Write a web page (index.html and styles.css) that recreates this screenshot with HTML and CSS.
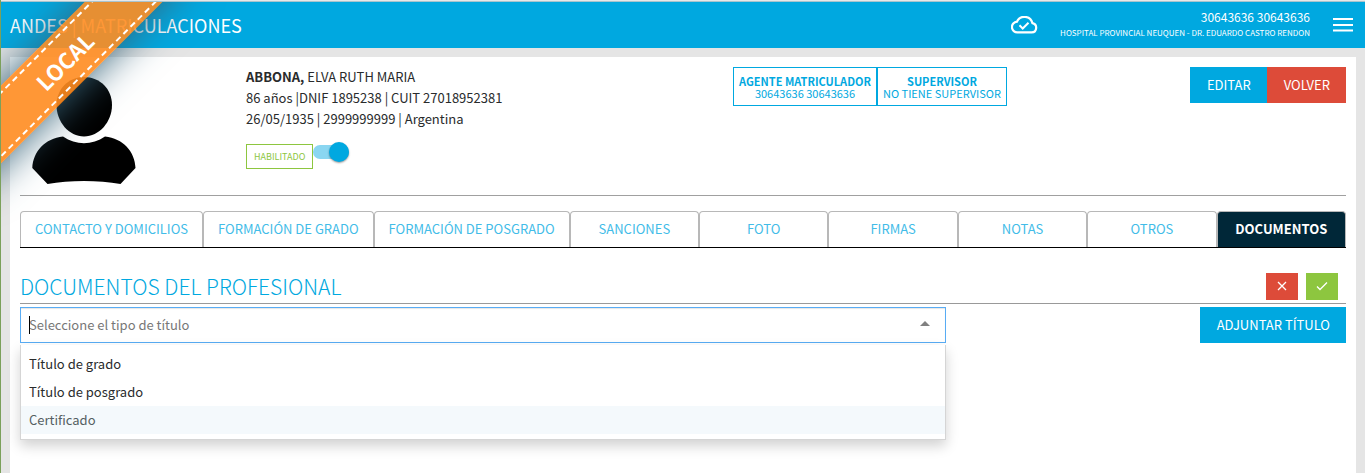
FILE: index.html
```html
<!DOCTYPE html>
<html lang="es">
<head>
<meta charset="utf-8">
<title>ANDES | Matriculaciones</title>
<link rel="stylesheet" href="styles.css">
</head>
<body>
<div class="ribbon-clip"><div class="ribbon"><span class="ribbon-text">LOCAL</span></div></div>
<header class="topbar">
  <h1 class="brand">ANDES | MATRICULACIONES</h1>
  <svg class="cloud" viewBox="0 0 27 18" aria-hidden="true"><path d="M6.7 16.4h14a4.7 4.7 0 0 0 .7-9.3A8.200 8.200 0 0 0 6 5.600a5.400 5.400 0 0 0 .7 10.800z" fill="none" stroke="#fff" stroke-width="2.200"/><path d="M8.500 9.300l3.200 3.200 5.800-5.800" fill="none" stroke="#fff" stroke-width="2"/></svg>
  <div class="user">
    <span class="user-name">30643636 30643636</span>
    <span class="user-org">HOSPITAL PROVINCIAL NEUQUEN - DR. EDUARDO CASTRO RENDON</span>
  </div>
  <button class="menu" type="button" aria-label="Menú"><svg viewBox="0 0 20 14" aria-hidden="true"><path d="M0 1h20M0 7h20M0 12.500h20" stroke="#fff" stroke-width="2"/></svg></button>
</header>
<main class="panel">
  <section class="profile">
    <svg class="avatar" viewBox="20 67 128 118" role="img" aria-label="Foto"><path d="M84 77c16 0 28 12 28 28 0 17-13 31.500-28 31.500S56.500 122 56.500 105c0-16 12-28 27.500-28z"/><path d="M63 136.500c13 9 29 9 42 0 18 2 30 15 30.500 31.500L120.500 184c-22-4-51-4-73 0L32.300 168c.7-16.500 12.700-29.500 30.700-31.500z"/></svg>
    <div class="info">
      <p class="line"><strong>ABBONA,</strong> ELVA RUTH MARIA</p>
      <p class="line">86 años |DNIF 1895238 | CUIT 27018952381</p>
      <p class="line">26/05/1935 | 2999999999 | Argentina</p>
      <div class="status">
        <label class="badge" for="enabled">HABILITADO</label>
        <input class="switch" id="enabled" type="checkbox" checked>
      </div>
    </div>
    <div class="side">
      <div class="agents">
        <div class="agent"><strong>AGENTE MATRICULADOR</strong><span>30643636 30643636</span></div>
        <div class="agent"><strong>SUPERVISOR</strong><span>NO TIENE SUPERVISOR</span></div>
      </div>
      <div class="actions">
        <button class="btn" type="button">EDITAR</button><button class="btn danger" type="button">VOLVER</button>
      </div>
    </div>
  </section>
  <nav class="tabs">
    <a class="tab" href="#contacto">CONTACTO Y DOMICILIOS</a>
    <a class="tab" href="#grado">FORMACIÓN DE GRADO</a>
    <a class="tab" href="#posgrado">FORMACIÓN DE POSGRADO</a>
    <a class="tab" href="#sanciones">SANCIONES</a>
    <a class="tab" href="#foto">FOTO</a>
    <a class="tab" href="#firmas">FIRMAS</a>
    <a class="tab" href="#notas">NOTAS</a>
    <a class="tab" href="#otros">OTROS</a>
    <a class="tab active" href="#documentos" aria-current="page">DOCUMENTOS</a>
  </nav>
  <div class="heading">
    <h2 class="title">DOCUMENTOS DEL PROFESIONAL</h2>
    <button class="icon-btn danger" type="button" aria-label="Cancelar"><svg viewBox="0 0 12 12" aria-hidden="true"><path d="M2 2l8 8M10 2l-8 8"/></svg></button>
    <button class="icon-btn success" type="button" aria-label="Guardar"><svg viewBox="0 0 12 12" aria-hidden="true"><path d="M1 6.500l3 3 7-7"/></svg></button>
  </div>
  <div class="form-row">
    <div class="combo">
      <input class="combo-input" type="text" role="combobox" aria-expanded="true" aria-controls="options" aria-label="Tipo de título" placeholder="Seleccione el tipo de título">
      <span class="caret"></span>
      <span class="arrow"></span>
      <ul class="options" id="options" role="listbox">
        <li class="option" role="option">Título de grado</li>
        <li class="option" role="option">Título de posgrado</li>
        <li class="option hover" role="option" aria-selected="true">Certificado</li>
      </ul>
    </div>
    <button class="btn" type="button">ADJUNTAR TÍTULO</button>
  </div>
</main>
</body>
</html>
```
FILE: styles.css
```css
* { box-sizing: border-box; }
body {
  margin: 0;
  min-height: 100vh;
  display: flex;
  flex-direction: column;
  border-left: 1px solid #7ba05b;
  background: #e5e5e5;
  color: #292b2c;
  font-family: "Source Sans Pro", "Noto Sans CJK SC", sans-serif;
  font-size: 13px;
  line-height: 21px;
}
h1, h2, p, ul { margin: 0; padding: 0; font-weight: 400; }
button, input { font: inherit; }
button { border: 0; padding: 0; color: #fff; cursor: pointer; }
.topbar {
  display: flex;
  align-items: center;
  height: 48px;
  padding: 2px 12px 0 9px;
  background: linear-gradient(#e8e8e8 1px, #a9c4ce 1px, #a9c4ce 2px, #00a8e0 2px);
  color: #fff;
}
.brand { flex: 1; padding-bottom: 1px; font-size: 18px; line-height: 24px; }
.cloud { width: 27px; height: 18px; margin-right: 22px; }
.user { display: flex; flex-direction: column; text-align: right; line-height: 16px; }
.user-name { font-size: 12px; }
.user-org { font-size: 8px; }
.menu { width: 20px; height: 14px; margin-left: 23px; background: none; }
.menu svg { display: block; }
.ribbon-clip {
  position: absolute;
  z-index: 3;
  top: 2px;
  left: 1px;
  width: 230px;
  height: 230px;
  overflow: hidden;
  pointer-events: none;
}
.ribbon {
  position: absolute;
  top: 33px;
  left: -88px;
  width: 300px;
  height: 55px;
  padding: 4px 0;
  transform: rotate(-45deg);
  background: rgba(255, 140, 32, 0.9);
  box-shadow: 0 0 42px #37647a;
}
.ribbon-text {
  display: block;
  padding-left: 4px;
  border-top: 2px dashed #fff;
  border-bottom: 2px dashed #fff;
  color: #fff;
  font-size: 22px;
  font-weight: 700;
  line-height: 43px;
  text-align: center;
}
.panel { flex: 1; margin: 9px 9px 0; padding: 10px; background: #fff; }
.profile {
  display: grid;
  grid-template-columns: 226fr 487fr 613fr;
  height: 129px;
  border-bottom: 1px solid #a0a0a0;
}
.avatar { width: 128px; height: 118px; }
.info { margin-top: -1px; }
.status { display: flex; margin-top: 15px; }
.badge {
  padding: 0 7px;
  border: 1px solid #8dc63f;
  color: #8dc63f;
  font-size: 9px;
  line-height: 23px;
}
.switch {
  appearance: none;
  position: relative;
  width: 36px;
  height: 14px;
  margin: 1px 0 0;
  border-radius: 7px;
  background: #8ad6f1;
}
.switch::after {
  content: "";
  position: absolute;
  top: -3px;
  right: 0;
  width: 20px;
  height: 20px;
  border-radius: 50%;
  background: #00a8e0;
  box-shadow: 0 1px 2px rgba(0, 0, 0, 0.4);
}
.side { display: flex; justify-content: space-between; align-items: flex-start; }
.agents { display: flex; color: #00a8e0; }
.agent {
  display: flex;
  flex-direction: column;
  padding: 7px 5px 6px;
  border: 1px solid #00a8e0;
  font-size: 11px;
  line-height: 12px;
  text-align: center;
}
.actions { display: flex; }
.btn { height: 36px; padding: 0 16px 1px 17px; background: #00a8e0; color: #fff; }
.danger { background: #dd4b39; }
.success { background: #8dc63f; }
.tabs { display: flex; margin-top: 15px; border-bottom: 1px solid #000; }
.tab {
  flex: 1 1 0;
  height: 36px;
  padding: 0 14px;
  border: 1px solid #b8b8b8;
  border-bottom: 0;
  border-radius: 4px 4px 0 0;
  color: #42bce8;
  line-height: 34px;
  text-align: center;
  text-decoration: none;
  white-space: nowrap;
}
.active { background: #002738; color: #fff; font-weight: 700; }
.heading {
  display: flex;
  align-items: center;
  gap: 8px;
  margin-top: 21px;
  padding: 3px 8px 3px 0;
  border-bottom: 1px solid #999;
}
.title { flex: 1; color: #00a8e0; font-size: 21px; font-weight: 300; line-height: 28px; }
.icon-btn { display: grid; place-items: center; width: 32px; height: 27px; }
.icon-btn svg { width: 12px; height: 12px; fill: none; stroke: #fff; stroke-width: 1.3; }
.form-row { display: flex; justify-content: space-between; align-items: flex-start; margin-top: 3px; }
.combo { position: relative; width: calc(70% - 2px); }
.combo-input {
  display: block;
  width: 100%;
  height: 36px;
  padding: 0 8px 2px;
  border: 1px solid #58acf4;
  background: #fff;
  box-shadow: inset 0 1px 1px rgba(0, 0, 0, 0.1);
}
.combo-input::placeholder { color: #777; opacity: 1; }
.caret { position: absolute; top: 9px; left: 9px; width: 1px; height: 18px; background: #000; }
.arrow {
  position: absolute;
  top: 14px;
  right: 16px;
  border: 5px solid transparent;
  border-top: 0;
  border-bottom-color: #808080;
}
.options {
  position: absolute;
  top: 38px;
  left: 0;
  right: 0;
  padding: 5px 0;
  border: 1px solid #d5d5d5;
  border-top: 0;
  background: #fff;
  box-shadow: 0 6px 12px rgba(0, 0, 0, 0.18);
  list-style: none;
}
.option { padding: 0 8px; line-height: 28px; }
.hover { background: #f4f9fc; color: #555f62; }
```
